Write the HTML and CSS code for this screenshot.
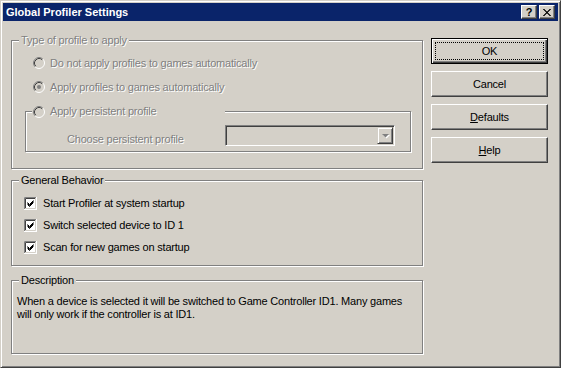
FILE: index.html
```html
<!DOCTYPE html>
<html>
<head>
	<title>Global Profiler Settings</title>
	<link rel="stylesheet" href="styles.css">
</head>
<body>

	<div class="window">
		<div class="titlebar">
			<span class="title">Global Profiler Settings</span>
			<span class="cap-btn cap-help">?</span>
			<span class="cap-btn">
				<svg width="8" height="7" viewBox="0 0 8 7"><path d="M0 0L7 7M1 0L8 7M7 0L0 7M8 0L1 7" stroke="#000" stroke-width="0.8"/></svg>
			</span>
		</div>

		<div class="client">
			<div class="main">

				<fieldset class="group">
					<legend class="disabled">Type of profile to apply</legend>
					<div class="type-body">
						<div class="radio-row disabled">
							<svg class="radio" width="12" height="12" viewBox="0 0 12 12">
								<circle cx="6" cy="6" r="5" fill="#d4d0c8"/>
								<path d="M2.11 9.89A5.5 5.5 0 0 1 9.89 2.11" stroke="#808080" fill="none"/>
								<path d="M9.89 2.11A5.5 5.5 0 0 1 2.11 9.89" stroke="#fff" fill="none"/>
								<path d="M2.82 9.18A4.5 4.5 0 0 1 9.18 2.82" stroke="#404040" fill="none"/>
							</svg>
							<span>Do not apply profiles to games automatically</span>
						</div>
						<div class="radio-row disabled">
							<svg class="radio" width="12" height="12" viewBox="0 0 12 12">
								<circle cx="6" cy="6" r="5" fill="#d4d0c8"/>
								<path d="M2.11 9.89A5.5 5.5 0 0 1 9.89 2.11" stroke="#808080" fill="none"/>
								<path d="M9.89 2.11A5.5 5.5 0 0 1 2.11 9.89" stroke="#fff" fill="none"/>
								<path d="M2.82 9.18A4.5 4.5 0 0 1 9.18 2.82" stroke="#404040" fill="none"/>
								<circle cx="6" cy="6" r="2" fill="#808080"/>
							</svg>
							<span>Apply profiles to games automatically</span>
						</div>

						<fieldset class="group sub">
							<legend class="radio-row disabled sub-legend">
								<svg class="radio" width="12" height="12" viewBox="0 0 12 12">
									<circle cx="6" cy="6" r="5" fill="#d4d0c8"/>
									<path d="M2.11 9.89A5.5 5.5 0 0 1 9.89 2.11" stroke="#808080" fill="none"/>
									<path d="M9.89 2.11A5.5 5.5 0 0 1 2.11 9.89" stroke="#fff" fill="none"/>
									<path d="M2.82 9.18A4.5 4.5 0 0 1 9.18 2.82" stroke="#404040" fill="none"/>
								</svg>
								<span>Apply persistent profile</span>
							</legend>
							<div class="sub-body">
								<span class="combo-label disabled">Choose persistent profile</span>
								<div class="combo">
									<span class="combo-btn">
										<svg width="9" height="6" viewBox="0 0 9 6">
											<path d="M2 2H9L5.5 5.5Z" fill="#fff"/>
											<path d="M1 1H8L4.5 4.5Z" fill="#808080"/>
										</svg>
									</span>
								</div>
							</div>
						</fieldset>
					</div>
				</fieldset>

				<fieldset class="group behavior">
					<legend>General Behavior</legend>
					<div class="behavior-body">
						<div class="check-row">
							<svg class="check" width="13" height="13" viewBox="0 0 13 13">
								<rect width="13" height="13" fill="#fff"/>
								<path d="M0.5 12V0.5H12" stroke="#808080" fill="none"/>
								<path d="M0 12.5H12.5V0" stroke="#fff" fill="none"/>
								<path d="M1.5 11V1.5H11" stroke="#404040" fill="none"/>
								<path d="M1 11.5H11.5V1" stroke="#d4d0c8" fill="none"/>
								<path d="M3.5 5.5l2 2l4-4M3.5 6.5l2 2l4-4M3.5 7.5l2 2l4-4" stroke="#000" fill="none"/>
							</svg>
							<span>Start Profiler at system startup</span>
						</div>
						<div class="check-row">
							<svg class="check" width="13" height="13" viewBox="0 0 13 13">
								<rect width="13" height="13" fill="#fff"/>
								<path d="M0.5 12V0.5H12" stroke="#808080" fill="none"/>
								<path d="M0 12.5H12.5V0" stroke="#fff" fill="none"/>
								<path d="M1.5 11V1.5H11" stroke="#404040" fill="none"/>
								<path d="M1 11.5H11.5V1" stroke="#d4d0c8" fill="none"/>
								<path d="M3.5 5.5l2 2l4-4M3.5 6.5l2 2l4-4M3.5 7.5l2 2l4-4" stroke="#000" fill="none"/>
							</svg>
							<span>Switch selected device to ID 1</span>
						</div>
						<div class="check-row">
							<svg class="check" width="13" height="13" viewBox="0 0 13 13">
								<rect width="13" height="13" fill="#fff"/>
								<path d="M0.5 12V0.5H12" stroke="#808080" fill="none"/>
								<path d="M0 12.5H12.5V0" stroke="#fff" fill="none"/>
								<path d="M1.5 11V1.5H11" stroke="#404040" fill="none"/>
								<path d="M1 11.5H11.5V1" stroke="#d4d0c8" fill="none"/>
								<path d="M3.5 5.5l2 2l4-4M3.5 6.5l2 2l4-4M3.5 7.5l2 2l4-4" stroke="#000" fill="none"/>
							</svg>
							<span>Scan for new games on startup</span>
						</div>
					</div>
				</fieldset>

				<fieldset class="group description">
					<legend>Description</legend>
					<p class="desc-text">When a device is selected it will be switched to Game Controller ID1. Many games<br>will only work if the controller is at ID1.</p>
				</fieldset>

			</div>

			<div class="buttons">
				<div class="btn btn-default"><span class="focus">OK</span></div>
				<div class="btn">Cancel</div>
				<div class="btn"><span><u>D</u>efaults</span></div>
				<div class="btn"><span><u>H</u>elp</span></div>
			</div>
		</div>
	</div>

</body>
</html>
```

FILE: styles.css
```css
body{
	margin: 0;
	background-color: #d4d0c8;
	font-family: "Liberation Sans", Arial, sans-serif;
	font-size: 11px;
	letter-spacing: -0.2px;
	color: #000;
}
.window{
	width: 561px;
	height: 368px;
	box-sizing: border-box;
	padding: 2px;
	border: 1px solid;
	border-color: #d4d0c8 #404040 #404040 #d4d0c8;
	box-shadow: inset 1px 1px #fff, inset -1px -1px #808080;
	background-color: #d4d0c8;
}
/* title bar */
.titlebar{
	display: flex;
	align-items: center;
	height: 18px;
	padding: 0 3px;
	background-color: #0a246a;
}
.title{
	flex: 1;
	color: #fff;
	font-weight: bold;
	letter-spacing: 0;
}
.cap-btn{
	display: flex;
	align-items: center;
	justify-content: center;
	width: 16px;
	height: 14px;
	box-sizing: border-box;
	margin-left: 2px;
	border: 1px solid;
	border-color: #fff #404040 #404040 #fff;
	box-shadow: inset -1px -1px #808080;
	background-color: #d4d0c8;
}
.cap-help{
	font-weight: bold;
	font-size: 11px;
	line-height: 12px;
	letter-spacing: 0;
}
/* client area */
.client{
	display: flex;
	gap: 8px;
	padding: 13px 0 0 8px;
}
.main{
	width: 412px;
}
.disabled{
	color: #808080;
	text-shadow: 1px 1px 0 #fff;
}
.group{
	margin: 0;
	padding: 0;
	min-width: 0;
	border: 1px solid #808080;
	box-shadow: inset 1px 1px #fff, 1px 1px #fff;
}
.group legend{
	margin-left: 7px;
	padding: 0 2px;
	line-height: 13px;
	background-color: #d4d0c8;
}
.type-body{
	padding: 8px 0 16px 21px;
}
.radio-row{
	display: flex;
	align-items: center;
	gap: 5px;
	height: 16px;
	margin-bottom: 8px;
}
.radio{
	flex: none;
}
.sub{
	margin: 7px 11px 0 -8px;
}
.group .sub-legend{
	width: 193px;
	box-sizing: border-box;
	height: 17px;
	line-height: 17px;
	margin: 0 0 0 6px;
	padding: 0 0 0 1px;
}
.sub-body{
	display: flex;
	align-items: center;
	padding: 5px 0 5px 41px;
}
.combo-label{
	width: 158px;
	padding-top: 6px;
}
.combo{
	display: flex;
	justify-content: flex-end;
	width: 170px;
	height: 21px;
	box-sizing: border-box;
	padding: 1px;
	border: 1px solid;
	border-color: #808080 #fff #fff #808080;
	box-shadow: inset 1px 1px #404040, inset -1px -1px #d4d0c8;
}
.combo-btn{
	display: flex;
	align-items: center;
	justify-content: center;
	width: 16px;
	height: 17px;
	box-sizing: border-box;
	border: 1px solid;
	border-color: #d4d0c8 #404040 #404040 #d4d0c8;
	box-shadow: inset 1px 1px #fff, inset -1px -1px #808080;
}
.behavior{
	margin-top: 5px;
}
.behavior-body{
	padding: 8px 0 4px 12px;
}
.check-row{
	display: flex;
	align-items: center;
	gap: 6px;
	height: 16px;
	margin-bottom: 6px;
}
.check{
	flex: none;
}
.description{
	margin-top: 8px;
}
.desc-text{
	margin: 0;
	padding: 8px 5px 32px 5px;
	line-height: 13px;
}
/* buttons on the right */
.buttons{
	display: flex;
	flex-direction: column;
	gap: 7px;
	padding-top: 4px;
}
.btn{
	display: flex;
	align-items: center;
	justify-content: center;
	width: 117px;
	height: 26px;
	box-sizing: border-box;
	border: 1px solid;
	border-color: #fff #404040 #404040 #fff;
	box-shadow: inset -1px -1px #808080;
}
.btn-default{
	padding: 3px;
	border-color: #000;
	box-shadow: inset 1px 1px #fff, inset -1px -1px #404040, inset -2px -2px #808080;
}
.focus{
	flex: 1;
	align-self: stretch;
	display: flex;
	align-items: center;
	justify-content: center;
	border: 1px dotted #000;
}
```
